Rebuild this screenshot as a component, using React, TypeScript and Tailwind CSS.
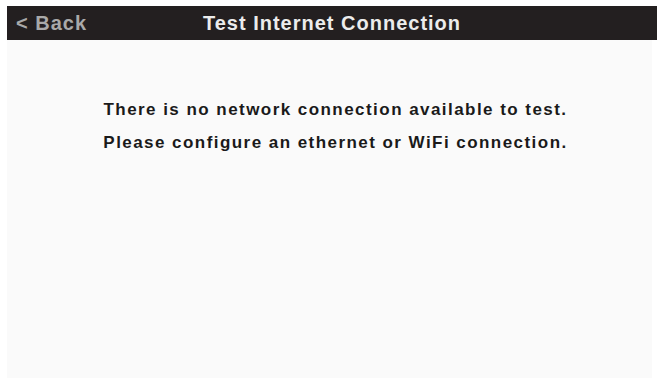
export default function App() {
    return (
        <div
            className="w-[662px] h-[382px] bg-white pt-[6px] pl-[7px] pr-[5px] pb-[4px] flex flex-col"
            style={{ fontFamily: '"Liberation Sans", Arial, sans-serif' }}
        >
            <div className="h-[34px] bg-[#231f20] flex items-center relative">
                <span className="absolute left-[9px] text-[20px] font-bold tracking-[1px] text-[#a9a9a9]">
                    &lt; Back
                </span>
                <h1 className="w-full text-center text-[20px] font-bold tracking-[1px] text-[#ececec]">
                    Test Internet Connection
                </h1>
            </div>
            <div className="flex-1 bg-[#fafafa] mr-[5px] pl-[12px] flex flex-col items-center pt-[58px] gap-[9px] text-[17px] leading-[24px] font-bold tracking-[1.45px] text-[#1a1a1a]">
                <p>There is no network connection available to test.</p>
                <p>Please configure an ethernet or WiFi connection.</p>
            </div>
        </div>
    );
}
